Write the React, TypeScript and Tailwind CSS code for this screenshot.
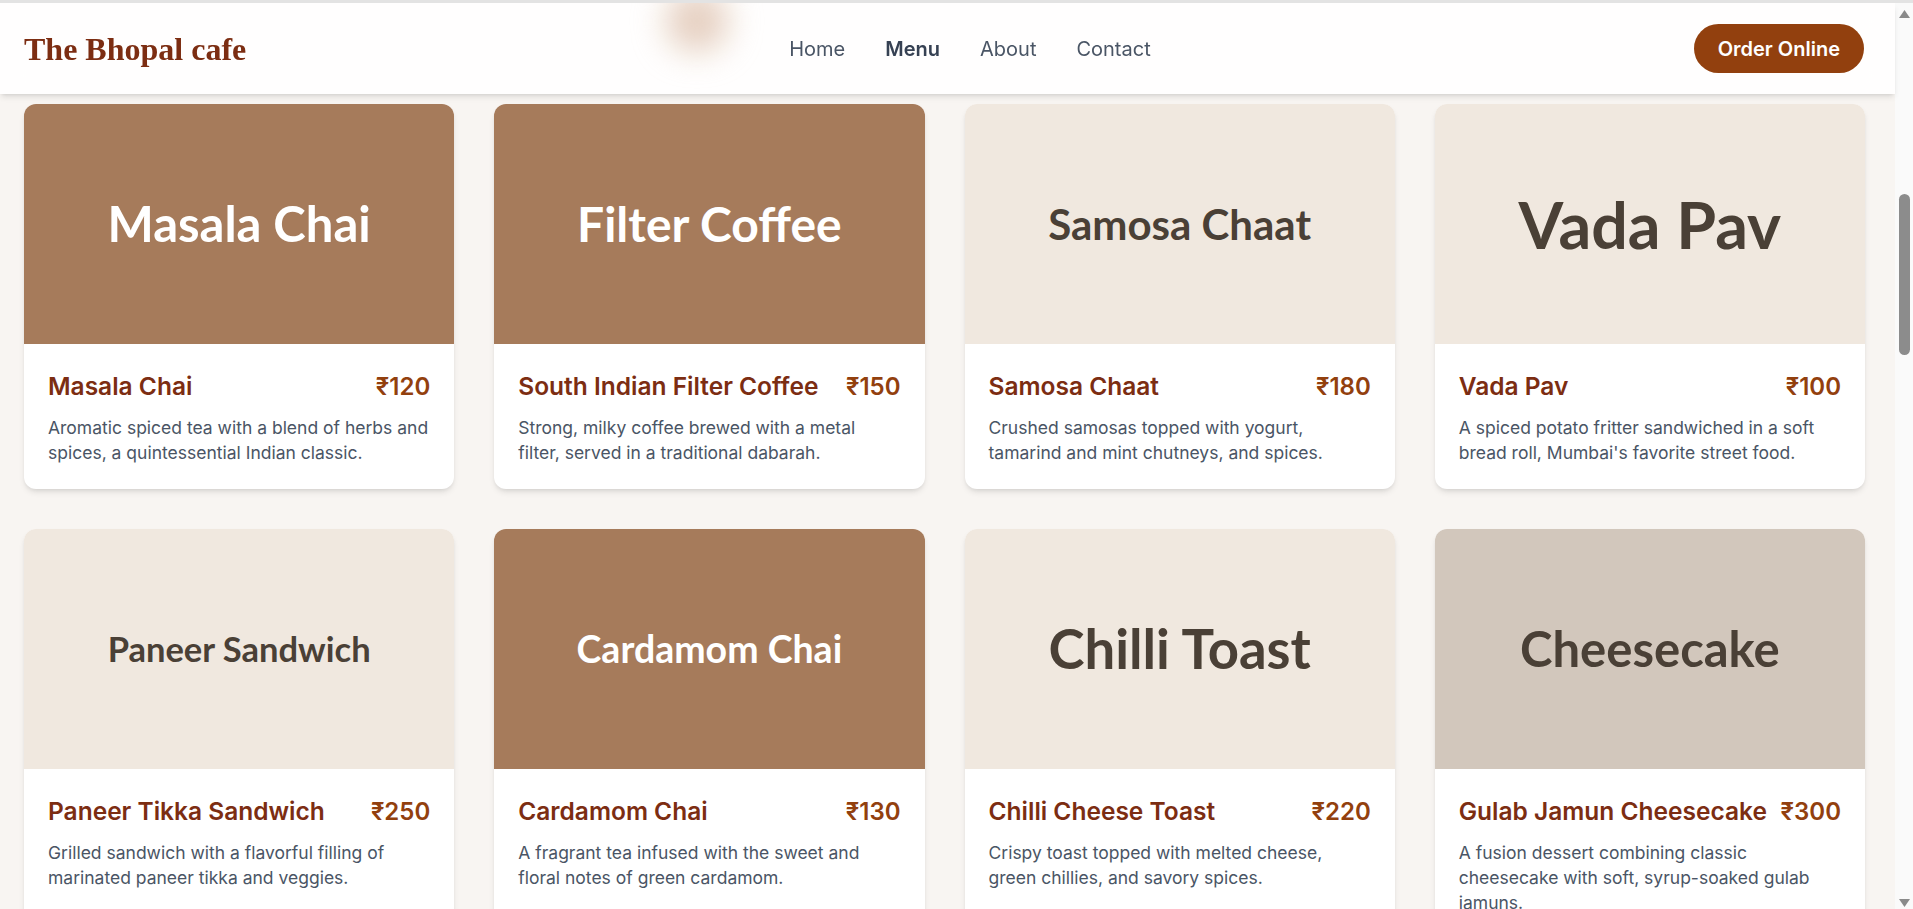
type Tone = 'brown' | 'beige' | 'stone';

type MenuItem = {
  label: string;
  name: string;
  price: number;
  desc: string;
  tone: Tone;
  size: string;
};

const items: MenuItem[] = [
  {
    label: 'Masala Chai',
    name: 'Masala Chai',
    price: 120,
    desc: 'Aromatic spiced tea with a blend of herbs and spices, a quintessential Indian classic.',
    tone: 'brown',
    size: 'text-[49px]',
  },
  {
    label: 'Filter Coffee',
    name: 'South Indian Filter Coffee',
    price: 150,
    desc: 'Strong, milky coffee brewed with a metal filter, served in a traditional dabarah.',
    tone: 'brown',
    size: 'text-[48px]',
  },
  {
    label: 'Samosa Chaat',
    name: 'Samosa Chaat',
    price: 180,
    desc: 'Crushed samosas topped with yogurt, tamarind and mint chutneys, and spices.',
    tone: 'beige',
    size: 'text-[42px]',
  },
  {
    label: 'Vada Pav',
    name: 'Vada Pav',
    price: 100,
    desc: "A spiced potato fritter sandwiched in a soft bread roll, Mumbai's favorite street food.",
    tone: 'beige',
    size: 'text-[64.5px]',
  },
  {
    label: 'Paneer Sandwich',
    name: 'Paneer Tikka Sandwich',
    price: 250,
    desc: 'Grilled sandwich with a flavorful filling of marinated paneer tikka and veggies.',
    tone: 'beige',
    size: 'text-[34.5px]',
  },
  {
    label: 'Cardamom Chai',
    name: 'Cardamom Chai',
    price: 130,
    desc: 'A fragrant tea infused with the sweet and floral notes of green cardamom.',
    tone: 'brown',
    size: 'text-[37.5px]',
  },
  {
    label: 'Chilli Toast',
    name: 'Chilli Cheese Toast',
    price: 220,
    desc: 'Crispy toast topped with melted cheese, green chillies, and savory spices.',
    tone: 'beige',
    size: 'text-[54.5px]',
  },
  {
    label: 'Cheesecake',
    name: 'Gulab Jamun Cheesecake',
    price: 300,
    desc: 'A fusion dessert combining classic cheesecake with soft, syrup-soaked gulab jamuns.',
    tone: 'stone',
    size: 'text-[49px]',
  },
];

const tones: Record<Tone, string> = {
  brown: 'bg-[#a67b5b] text-white',
  beige: 'bg-[#f0e8df] text-[#4a4036]',
  stone: 'bg-[#d2c7bc] text-[#4a4036]',
};

function Header() {
  return (
    <header className="sticky top-0 z-30 bg-white/90 shadow-md backdrop-blur-md">
      <div className="relative flex items-center justify-between overflow-hidden py-[21px] pl-6 pr-[31px]">
        {/* blurred shape showing through the glass header */}
        <div className="pointer-events-none absolute left-[665px] top-[-14px] h-[64px] w-[64px] rounded-full bg-[#dcbca6]/70 blur-lg" />
        <a href="#" className="relative font-['Liberation_Serif',serif] text-[32px] font-bold text-[#7c2d12]">
          The Bhopal cafe
        </a>
        <nav className="relative flex items-center gap-10 text-xl text-gray-600">
          <a href="#">Home</a>
          <a href="#" className="font-semibold text-gray-700">Menu</a>
          <a href="#">About</a>
          <a href="#">Contact</a>
        </nav>
        <button className="relative flex h-[49px] items-center rounded-full bg-[#92400e] px-6 text-xl font-semibold text-white">
          Order Online
        </button>
      </div>
    </header>
  );
}

function MenuCard({ item }: { item: MenuItem }) {
  return (
    <article className="overflow-hidden rounded-xl bg-white shadow-md">
      <div
        className={`flex h-60 items-center justify-center font-['Lato',sans-serif] font-bold ${tones[item.tone]} ${item.size}`}
      >
        {item.label}
      </div>
      <div className="p-6">
        <div className="mb-2.5 flex items-baseline justify-between gap-2">
          <h3 className="text-[24.5px] font-semibold leading-9 text-[#7c2d12]">{item.name}</h3>
          <span className="whitespace-nowrap text-[24px] font-semibold leading-9 text-[#92400e]">₹{item.price}</span>
        </div>
        <p className="text-[17.5px] leading-[25px] text-gray-600">{item.desc}</p>
      </div>
    </article>
  );
}

function ScrollRail() {
  return (
    <div className="flex w-[18px] shrink-0 flex-col items-center bg-[#fafafa] pb-[2px] pt-[7px]">
      <svg width="11" height="8" viewBox="0 0 11 8">
        <path d="M5.5 0 L11 8 L0 8 Z" fill="#8a8a8a" />
      </svg>
      <div className="mt-[176px] h-[161px] w-[11px] rounded-full bg-[#8c8c8c]" />
      <div className="flex-1" />
      <svg width="11" height="8" viewBox="0 0 11 8">
        <path d="M0 0 L11 0 L5.5 8 Z" fill="#8a8a8a" />
      </svg>
    </div>
  );
}

export default function App() {
  return (
    <div className="flex h-screen flex-col overflow-hidden border-t-[3px] border-[#e3e3e3] bg-[#f8f5f2] font-['Inter',sans-serif]">
      <div className="flex min-h-0 flex-1">
        <main className="min-w-0 flex-1">
          <Header />
          <section className="grid grid-cols-4 gap-10 pb-24 pl-6 pr-[30px] pt-[10px]">
            {items.map((item) => (
              <MenuCard key={item.name} item={item} />
            ))}
          </section>
        </main>
        <ScrollRail />
      </div>
    </div>
  );
}
